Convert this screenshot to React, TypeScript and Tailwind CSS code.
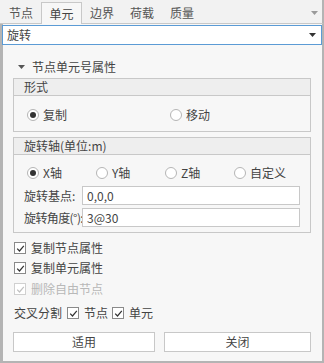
import React from "react";

const font = { fontFamily: '"Noto Sans CJK SC", "Noto Sans", sans-serif' };

function Radio({ checked, label }: { checked?: boolean; label: string }) {
  return (
    <div className="flex items-center gap-[4px]">
      <span className="w-[12px] h-[12px] rounded-full border border-[#b5b5b5] bg-white flex items-center justify-center">
        {checked && <span className="w-[6px] h-[6px] rounded-full bg-[#333]" />}
      </span>
      <span>{label}</span>
    </div>
  );
}

function Check({ label, disabled }: { label: string; disabled?: boolean }) {
  return (
    <div className={`flex items-center gap-[5px] ${disabled ? "text-[#b8b8b8]" : ""}`}>
      <span className={`w-[12px] h-[12px] border bg-white flex items-center justify-center ${disabled ? "border-[#d0d0d0]" : "border-[#8a8a8a]"}`}>
        <svg width="9" height="9" viewBox="0 0 9 9">
          <path d="M1.2 4.6 L3.5 7 L7.8 1.8" fill="none" stroke={disabled ? "#c0c0c0" : "#333"} strokeWidth="1.2" />
        </svg>
      </span>
      <span>{label}</span>
    </div>
  );
}

export default function App() {
  const tabs = ["节点", "单元", "边界", "荷载", "质量"];
  return (
    <div style={font} className="w-[324px] h-[363px] bg-[#f7f7f7] text-[12px] text-[#444] flex flex-col overflow-hidden">
      {/* tab bar */}
      <div className="h-[24px] flex items-end bg-[#f2f2f2] border-b border-[#c8c8c8] border-r-2 border-r-[#b4b4b4] relative">
        <div className="flex items-end pl-[1px]">
          {tabs.map((t, i) => (
            <div
              key={t}
              className={
                i === 1
                  ? "w-[41px] h-[22px] bg-[#f7f7f7] border border-[#c8c8c8] border-b-0 -mb-px flex items-center justify-center"
                  : "w-[40px] h-[21px] flex items-center justify-center text-[#555]"
              }
            >
              {t}
            </div>
          ))}
        </div>
        <svg className="absolute right-[4px] top-[11px]" width="7" height="4" viewBox="0 0 7 4">
          <path d="M0 0 L7 0 L3.5 4 Z" fill="#9a9a9a" />
        </svg>
      </div>
      {/* body */}
      <div className="flex-1 flex flex-col border-l-[3px] border-l-[#b4b4b4] border-r-2 border-r-[#b4b4b4] border-b-2 border-b-[#b4b4b4]">
        <div className="mt-px ml-[-1px] h-[20px] bg-white border border-[#5b9bd5] flex items-center justify-between pl-[4px] pr-[5px]">
          <span>旋转</span>
          <svg width="7" height="4" viewBox="0 0 7 4">
            <path d="M0 0 L7 0 L3.5 4 Z" fill="#333" />
          </svg>
        </div>
        <div className="flex items-center h-[16px] mt-[14px] pl-[15px] gap-[7px]">
          <svg width="7" height="4" viewBox="0 0 7 4">
            <path d="M0 0 L7 0 L3.5 4 Z" fill="#555" />
          </svg>
          <span>节点单元号属性</span>
        </div>
        {/* group 1 */}
        <div className="ml-[10px] w-[298px] mt-[3px] border border-[#c8c8c8] bg-[#f7f7f7]">
          <div className="h-[17px] bg-[#eeeeee] border-b border-[#c8c8c8] flex items-center pl-[10px]">形式</div>
          <div className="h-[35px] flex items-center pt-[2px] pl-[13px]">
            <div className="w-[143px]"><Radio checked label="复制" /></div>
            <Radio label="移动" />
          </div>
        </div>
        {/* group 2 */}
        <div className="ml-[10px] w-[298px] mt-[5px] border border-[#c8c8c8] bg-[#f7f7f7]">
          <div className="h-[17px] bg-[#eeeeee] border-b border-[#c8c8c8] flex items-center pl-[10px]">旋转轴(单位:m)</div>
          <div className="flex items-center h-[14px] mt-[11px] pl-[13px]">
            <div className="w-[69px]"><Radio checked label="X轴" /></div>
            <div className="w-[69px]"><Radio label="Y轴" /></div>
            <div className="w-[69px]"><Radio label="Z轴" /></div>
            <Radio label="自定义" />
          </div>
          <div className="flex items-center mt-[6px] pl-[10px]">
            <span className="w-[58px]">旋转基点:</span>
            <div className="w-[218px] h-[19px] bg-white border border-[#c8c8c8] flex items-center pl-[4px]">0,0,0</div>
          </div>
          <div className="flex items-center mt-[3px] pl-[10px] mb-[5px]">
            <span className="w-[58px] whitespace-nowrap tracking-[-0.6px]">旋转角度(°):</span>
            <div className="w-[218px] h-[19px] bg-white border border-[#c8c8c8] flex items-center pl-[4px]">3@30</div>
          </div>
        </div>
        <div className="pl-[11px] flex flex-col">
          <div className="mt-[7px] h-[16px] flex items-center"><Check label="复制节点属性" /></div>
          <div className="mt-[4px] h-[16px] flex items-center"><Check label="复制单元属性" /></div>
          <div className="mt-[5px] h-[16px] flex items-center"><Check disabled label="删除自由节点" /></div>
          <div className="mt-[8px] h-[16px] flex items-center gap-[5px]">
            <span>交叉分割</span>
            <Check label="节点" />
            <span className="-ml-[1px]"><Check label="单元" /></span>
          </div>
        </div>
        <div className="flex mt-[11px] ml-[10px] gap-[9px]">
          <div className="w-[142px] h-[20px] bg-white border border-[#c8c8c8] flex items-center justify-center">适用</div>
          <div className="w-[147px] h-[20px] bg-white border border-[#c8c8c8] flex items-center justify-center">关闭</div>
        </div>
      </div>
    </div>
  );
}
